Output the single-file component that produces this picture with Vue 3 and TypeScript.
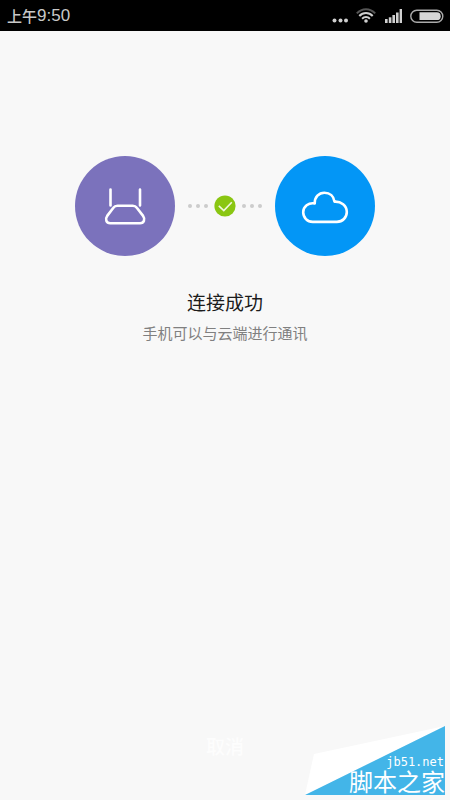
<script setup lang="ts">
import { ref } from 'vue'

const period = ref('上午')
const time = ref('9:50')
const title = ref('连接成功')
const detail = ref('手机可以与云端进行通讯')
</script>

<template>
  <div class="page">
    <header class="status-bar">
      <div class="clock"><span class="period">{{ period }}</span><span class="time">{{ time }}</span></div>
      <div class="indicators">
        <svg width="16" height="18" viewBox="0 0 16 18" fill="#d0d0d0" aria-hidden="true">
          <circle cx="2.5" cy="13.5" r="2" />
          <circle cx="8.5" cy="13.5" r="2" />
          <circle cx="14" cy="13.5" r="2" />
        </svg>
        <svg class="wifi" width="20" height="18" viewBox="0 0 20 18" fill="none" stroke-width="2" aria-hidden="true">
          <path d="M.8 6.4C6 .7 14 .7 19.2 6.4" stroke="#555" />
          <path d="M3.3 9c3.8-4 9.6-4 13.4 0" stroke="#d0d0d0" />
          <path d="M6.1 11.7c2.3-2.3 5.5-2.3 7.8 0" stroke="#d0d0d0" />
          <circle cx="10" cy="14" r="1.8" fill="#d0d0d0" />
        </svg>
        <svg class="signal" width="18" height="18" viewBox="0 0 18 18" fill="#d0d0d0" aria-hidden="true">
          <rect x="1" y="12" width="2.6" height="4" />
          <rect x="4.8" y="10.3" width="2.6" height="5.7" />
          <rect x="8.4" y="8" width="2.6" height="8" />
          <rect x="12" y="5.5" width="2.6" height="10.5" />
          <rect x="15.6" y="2" width="2.6" height="14" />
        </svg>
        <svg width="34" height="18" viewBox="0 0 34 18" aria-hidden="true">
          <rect x=".8" y="3.2" width="32" height="12" rx="6" fill="none" stroke="#aaa" stroke-width="1.4" />
          <path d="M9.5 5.3h17.3a3.9 3.9 0 0 1 0 7.8H9.5z" fill="#d6d6d6" />
        </svg>
      </div>
    </header>

    <main class="content">
      <div class="link">
        <div class="device router">
          <svg width="48" height="48" viewBox="0 0 48 48" fill="none" stroke="#fff" stroke-linecap="round" stroke-linejoin="round" aria-hidden="true">
            <path d="M9.5 7.5v16M39 7.5v16" stroke-width="2.6" />
            <path d="M16.5 23.8h15.2c1.9 0 3.1.6 4.1 2l6.3 8.1c2.4 3.3.9 7.3-3 7.3H9.2c-3.9 0-5.4-4-3-7.3l6.2-8.1c1-1.4 2.2-2 4.1-2z" stroke-width="2.6" />
          </svg>
        </div>
        <div class="progress">
          <span class="dots"><i></i><i></i><i></i></span>
          <svg width="22" height="22" viewBox="0 0 22 22" aria-hidden="true">
            <circle cx="11" cy="11" r="10.6" fill="#8ac612" />
            <path d="M4.8 10.8l5 4.8 8-8.3" fill="none" stroke="#f1f7df" stroke-width="1.6" />
          </svg>
          <span class="dots"><i></i><i></i><i></i></span>
        </div>
        <div class="device cloud">
          <svg width="48" height="48" viewBox="0 0 48 48" fill="none" stroke="#fff" stroke-width="2.6" stroke-linejoin="round" aria-hidden="true">
            <path d="M11.7 39.9C6.3 39.9 2.2 35.6 2.2 30.3c0-5.7 5.3-10 11.5-8.9 0-6.2 4-10.7 9.7-10.7 5.6 0 9.5 3.7 10.1 9 6.6-.4 12.3 3.9 12.3 10.2 0 5.7-4.3 10-9.9 10z" />
          </svg>
        </div>
      </div>
      <h1>{{ title }}</h1>
      <p>{{ detail }}</p>
    </main>

    <footer class="actions">
      <button type="button">取消</button>
    </footer>

    <div class="watermark">
      <svg width="140" height="69" viewBox="0 0 140 69" aria-hidden="true">
        <path d="M0 69L9 28 140 0z" fill="#fff" />
        <path d="M0 69L140 0v69z" fill="#43b5e8" />
      </svg>
      <div class="watermark-text">
        <span class="domain">jb51.net</span>
        <span class="site">脚本之家</span>
      </div>
    </div>
  </div>
</template>

<style>
body {
  background: #f8f8f8;
}
</style>

<style scoped>
.page {
  position: relative;
  display: flex;
  flex-direction: column;
  min-height: 100vh;
  background: #f8f8f8;
  font-family: Roboto, "Noto Sans CJK SC", sans-serif;
}

.status-bar {
  display: flex;
  align-items: center;
  justify-content: space-between;
  box-sizing: border-box;
  height: 31px;
  padding: 0 6px 0 7px;
  background: #000;
  color: #c8c8c8;
}

.clock {
  display: flex;
  align-items: center;
  line-height: 31px;
}

.period {
  font-family: "Noto Sans CJK SC", sans-serif;
  font-size: 15px;
  font-weight: 500;
}

.time {
  font-family: "Liberation Sans", sans-serif;
  font-size: 17px;
}

.indicators {
  display: flex;
  align-items: center;
  gap: 8px;
}

.indicators svg {
  display: block;
}

.content {
  display: flex;
  flex: 1;
  flex-direction: column;
  align-items: center;
  padding: 125px 16px 0;
}

.link {
  display: flex;
  align-items: center;
}

.device {
  display: flex;
  align-items: center;
  justify-content: center;
  width: 100px;
  height: 100px;
  border-radius: 50%;
}

.router {
  background: #7b72bc;
}

.cloud {
  background: #0396f6;
}

.progress {
  display: flex;
  align-items: center;
  justify-content: center;
  gap: 6px;
  width: 100px;
}

.dots {
  display: flex;
  gap: 4px;
}

.dots i {
  width: 4px;
  height: 4px;
  border-radius: 50%;
  background: #ccc;
}

h1 {
  margin: 34px 0 0;
  color: #1c1c1c;
  font-size: 19px;
  font-weight: 400;
  line-height: 28px;
}

p {
  margin: 4px 0 0;
  color: #808080;
  font-size: 15px;
  line-height: 24px;
}

.actions {
  display: flex;
  justify-content: center;
  padding-bottom: 34px;
}

.actions button {
  padding: 0 24px;
  border: 0;
  background: transparent;
  color: #fdfdfd;
  font-family: inherit;
  font-size: 19px;
  font-weight: 500;
  line-height: 36px;
}

.watermark {
  position: absolute;
  right: 5px;
  bottom: 5px;
}

.watermark svg {
  display: block;
}

.watermark-text {
  position: absolute;
  right: 0;
  bottom: 0;
  display: flex;
  flex-direction: column;
  align-items: flex-end;
  color: #fff;
  white-space: nowrap;
}

.domain {
  padding-right: 1px;
  font-family: "DejaVu Sans Mono", monospace;
  font-size: 12px;
  line-height: 10px;
}

.site {
  font-family: "Noto Sans CJK SC", sans-serif;
  font-size: 24px;
  line-height: 28px;
}
</style>
